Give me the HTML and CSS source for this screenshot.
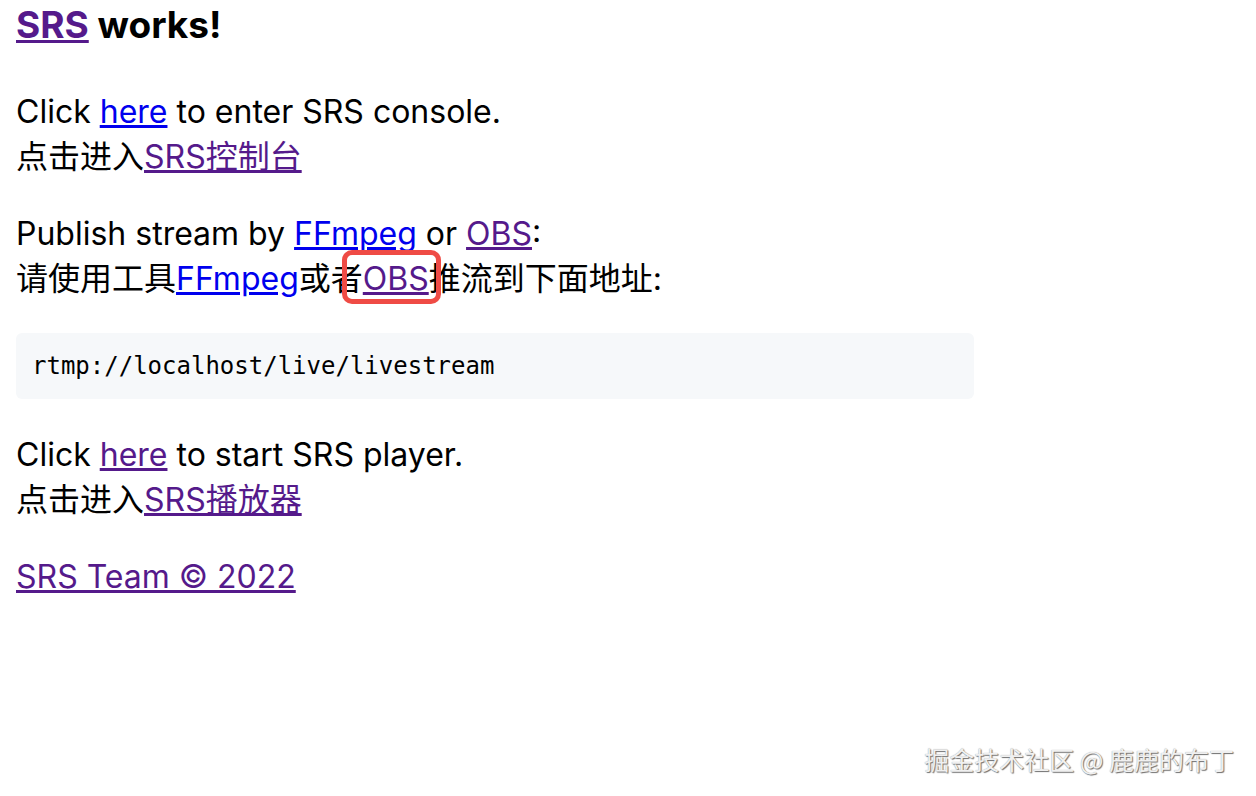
FILE: index.html
```html
<!DOCTYPE html>
<html lang="en">
<head>
    <meta charset="UTF-8">
    <title>SRS</title>
    <link rel="stylesheet" href="styles.css">
</head>
<body>

<h3><a class="visited" href="#srs">SRS</a> works!</h3>

<p>
    Click <a href="#console">here</a> to enter SRS console.<br>
    点击进入<a class="visited" href="#console-cn">SRS控制台</a>
</p>

<p>
    Publish stream by <a href="#ffmpeg">FFmpeg</a> or <a class="visited" href="#obs">OBS</a>:<br>
    请使用工具<a href="#ffmpeg">FFmpeg</a>或者<span class="marked"><a class="visited" href="#obs">OBS</a></span>推流到下面地址:
</p>

<pre class="code">rtmp://localhost/live/livestream</pre>

<p>
    Click <a class="visited" href="#player">here</a> to start SRS player.<br>
    点击进入<a class="visited" href="#player-cn">SRS播放器</a>
</p>

<p>
    <a class="visited" href="#team">SRS Team &copy; 2022</a>
</p>

<div class="watermark">掘金技术社区 @ 鹿鹿的布丁</div>

</body>
</html>
```

FILE: styles.css
```css
body {
    margin: 0;
    padding: 0 16px;
    font-family: Inter, "Noto Sans CJK SC", sans-serif;
    font-size: 32px;
    line-height: 45px;
    color: #000;
    background: #fff;
}
a {
    color: #0000ee;
}
a.visited {
    color: #551a8b;
}
h3 {
    font-size: 37px;
    line-height: 50px;
    margin: 0 0 39px;
}
p {
    margin: 32px 0;
}
.code {
    max-width: 924px;
    margin: 32px 0 33px;
    padding: 19px 18px 19px 16px;
    background-color: #f6f8fa;
    border-radius: 6px;
    font-family: "DejaVu Sans Mono", monospace;
    font-size: 24px;
    line-height: 28px;
}
/* red highlight box drawn over the OBS link */
.marked {
    position: relative;
    display: inline-block;
}
.marked::after {
    content: "";
    position: absolute;
    top: -6px;
    bottom: -3px;
    left: -21px;
    right: -12px;
    border: 5px solid #ef4b45;
    border-radius: 10px;
}
.watermark {
    position: absolute;
    right: 22px;
    top: 743px;
    font-family: "Noto Sans CJK SC", sans-serif;
    font-size: 25px;
    line-height: 32px;
    color: #f0f0f0;
    text-shadow: 1px 1px 1px #6f6f6f, 0 0 1px #9a9a9a;
}
```
